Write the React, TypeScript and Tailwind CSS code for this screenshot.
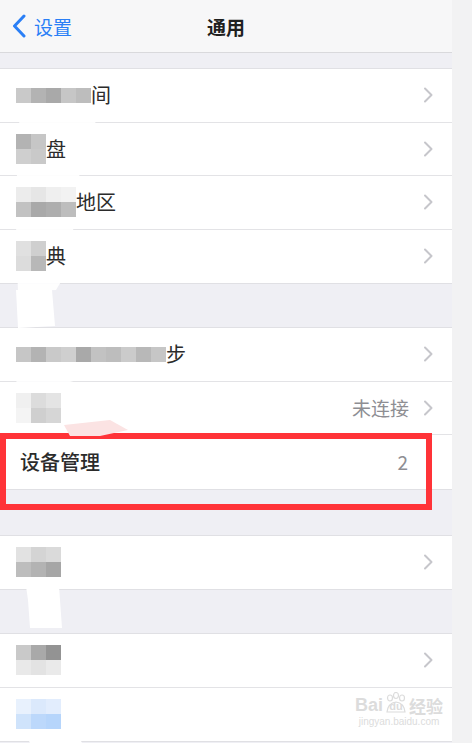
const FONT = "font-['Noto_Sans_CJK_SC','Noto_Sans',sans-serif]"

function Chevron() {
  return (
    <svg width="10" height="16" viewBox="0 0 10 16" className="shrink-0">
      <path d="M2 1.5 L8.5 8 L2 14.5" fill="none" stroke="#c6c6cb" strokeWidth="2" strokeLinecap="round" strokeLinejoin="round" />
    </svg>
  )
}

function Mosaic({ rows }: { rows: string[][] }) {
  return (
    <div className="relative z-10 flex flex-col">
      {rows.map((r, i) => (
        <div key={i} className="flex">
          {r.map((c, j) => (
            <div key={j} className="w-[15px] h-[15px]" style={{ background: c }} />
          ))}
        </div>
      ))}
    </div>
  )
}

type RowProps = {
  mosaic: string[][]
  tail?: string
  value?: string
  chevron?: boolean
  last?: boolean
}

function Row({ mosaic, tail, value, chevron = true, last }: RowProps) {
  return (
    <div className={`h-[53.5px] flex items-center pl-[16px] pr-[19px] bg-white ${last ? "" : "border-b border-[#e3e3e6]"}`}>
      <Mosaic rows={mosaic} />
      {tail && <span className="relative z-10 text-[20px] text-[#2b2b2b] leading-none">{tail}</span>}
      <div className="flex-1" />
      {value && <span className="text-[19px] text-[#8e8e93] mr-[14px] leading-none">{value}</span>}
      {chevron && <Chevron />}
    </div>
  )
}

const g = ["#c9c9c9", "#b3b3b3", "#a9a9a9", "#c6c6c6", "#bdbdbd", "#cfcfcf", "#b8b8b8", "#c2c2c2", "#aeaeae", "#cbcbcb"]

export default function App() {
  return (
    <div className={`w-[472px] h-[743px] overflow-hidden flex bg-[#f2f2f3] ${FONT}`}>
      <div className="relative w-[452px] h-full bg-[#efeff4]">
        {/* nav bar */}
        <div className="h-[53px] bg-[#f7f7f8] border-b border-[#d9d9dc] flex items-center relative">
          <div className="flex items-center pl-[12px] gap-[8px]">
            <svg width="14" height="24" viewBox="0 0 14 24">
              <path d="M12 2 L2.5 12 L12 22" fill="none" stroke="#2a7ff6" strokeWidth="3" strokeLinecap="round" strokeLinejoin="round" />
            </svg>
            <span className="text-[19px] text-[#2a7ff6] leading-none">设置</span>
          </div>
          <span className="absolute left-1/2 -translate-x-1/2 text-[19px] font-semibold text-[#1f1f1f] leading-none">通用</span>
        </div>

        <div className="h-[15px]" />
        <div className="border-t border-b border-[#e0e0e4]">
          <Row mosaic={[[g[0], g[1], g[2], g[3], g[4]]]} tail="间" />
          <Row mosaic={[[g[1], g[3]], [g[5], g[0]]]} tail="盘" />
          <Row mosaic={[["#ececec", "#e6e6e6", "#efefef", "#f2f2f2"], [g[7], g[2], g[8], g[4]]]} tail="地区" />
          <Row mosaic={[["#e0e0e0", g[5]], ["#dcdcdc", g[6]]]} tail="典" last />
        </div>

        <div className="h-[43px]" />
        <div className="border-t border-b border-[#e0e0e4]">
          <Row mosaic={[[g[3], g[1], g[0], g[5], g[2], g[7], g[4], g[9], g[6], g[3]]]} tail="步" />
          <Row mosaic={[["#f0f0f0", "#dcdcdc", "#e4e4e4"], ["#f4f4f4", g[5], "#d6d6d6"]]} value="未连接" />
          <div className="h-[53.5px] flex items-center pl-[20px] pr-[44px] bg-white">
            <span className="text-[20px] text-[#2b2b2b] font-medium leading-none">设备管理</span>
            <div className="flex-1" />
            <span className="text-[19px] text-[#8e8e93] leading-none">2</span>
          </div>
        </div>

        <div className="h-[45px]" />
        <div className="border-t border-b border-[#e0e0e4]">
          <Row mosaic={[["#e2e2e2", "#d4d4d4", "#dadada"], [g[4], g[1], "#a6a6a6"]]} last />
        </div>

        <div className="h-[43px]" />
        <div className="border-t border-b border-[#e0e0e4]">
          <Row mosaic={[[g[0], "#a9a9a9", "#939393"], ["#e9e9e9", "#e3e3e3", "#eaeaea"]]} />
          <div className="h-[53.5px] flex items-center pl-[16px] pr-[19px] bg-white relative">
            <Mosaic rows={[["#e8f1fd", "#dbe9fc", "#e2edfd"], ["#cfe3fb", "#bcd8fb", "#b6d5fb"]]} />
            {/* baidu watermark */}
            <div className="absolute right-[9px] top-[4px] flex flex-col items-center text-[#dcdcdc]">
              <div className="flex items-end leading-none">
                <span className="text-[18px] font-bold font-['Liberation_Sans',sans-serif]">Bai</span>
                <span className="relative mx-[1px] w-[24px] h-[22px] flex items-end justify-center">
                  <svg width="24" height="22" viewBox="0 0 24 22" className="absolute inset-0">
                    <ellipse cx="6" cy="6" rx="2.5" ry="3" fill="none" stroke="#dcdcdc" strokeWidth="1.2" />
                    <ellipse cx="12" cy="3.5" rx="2.5" ry="3" fill="none" stroke="#dcdcdc" strokeWidth="1.2" />
                    <ellipse cx="18" cy="6" rx="2.5" ry="3" fill="none" stroke="#dcdcdc" strokeWidth="1.2" />
                    <path d="M3 20 Q4 11 12 10 Q20 11 21 20 Z" fill="none" stroke="#dcdcdc" strokeWidth="1.2" />
                  </svg>
                  <span className="relative text-[11px] font-bold font-['Liberation_Sans',sans-serif] mb-[2px]">du</span>
                </span>
                <span className="text-[17px] font-bold">经验</span>
              </div>
              <span className="text-[10px] leading-none mt-[3px] font-['Liberation_Sans',sans-serif]">jingyan.baidu.com</span>
            </div>
          </div>
        </div>

        {/* red highlight */}
        <div className="absolute left-0 top-[433px] w-[432px] h-[77px] border-[6px] border-[#ff3338]" />

        {/* white brush strokes over redacted area */}
        <svg className="absolute left-0 top-0 pointer-events-none" width="452" height="743">
          <path d="M20 106 L98 104 L95 125 L80 170 L72 240 L62 280 L56 290 L18 292 L16 240 L17 170 Z" fill="#ffffff" opacity="0.9" />
          <path d="M16 290 L52 290 L55 326 L18 328 Z" fill="#ffffff" />
          <path d="M60 368 L160 332 L168 350 L120 368 L70 382 L135 410 L125 430 L90 420 L18 418 L16 372 Z" fill="#ffffff" opacity="0.85" />
          <path d="M64 425 L110 420 L128 430 L100 436 L70 436 Z" fill="#fbe3e3" />
          <path d="M24 572 L58 572 L60 600 L62 628 L30 628 L28 600 Z" fill="#ffffff" />
          <path d="M26 735 L78 735 L82 743 L30 743 Z" fill="#ffffff" />
        </svg>
      </div>
    </div>
  )
}
